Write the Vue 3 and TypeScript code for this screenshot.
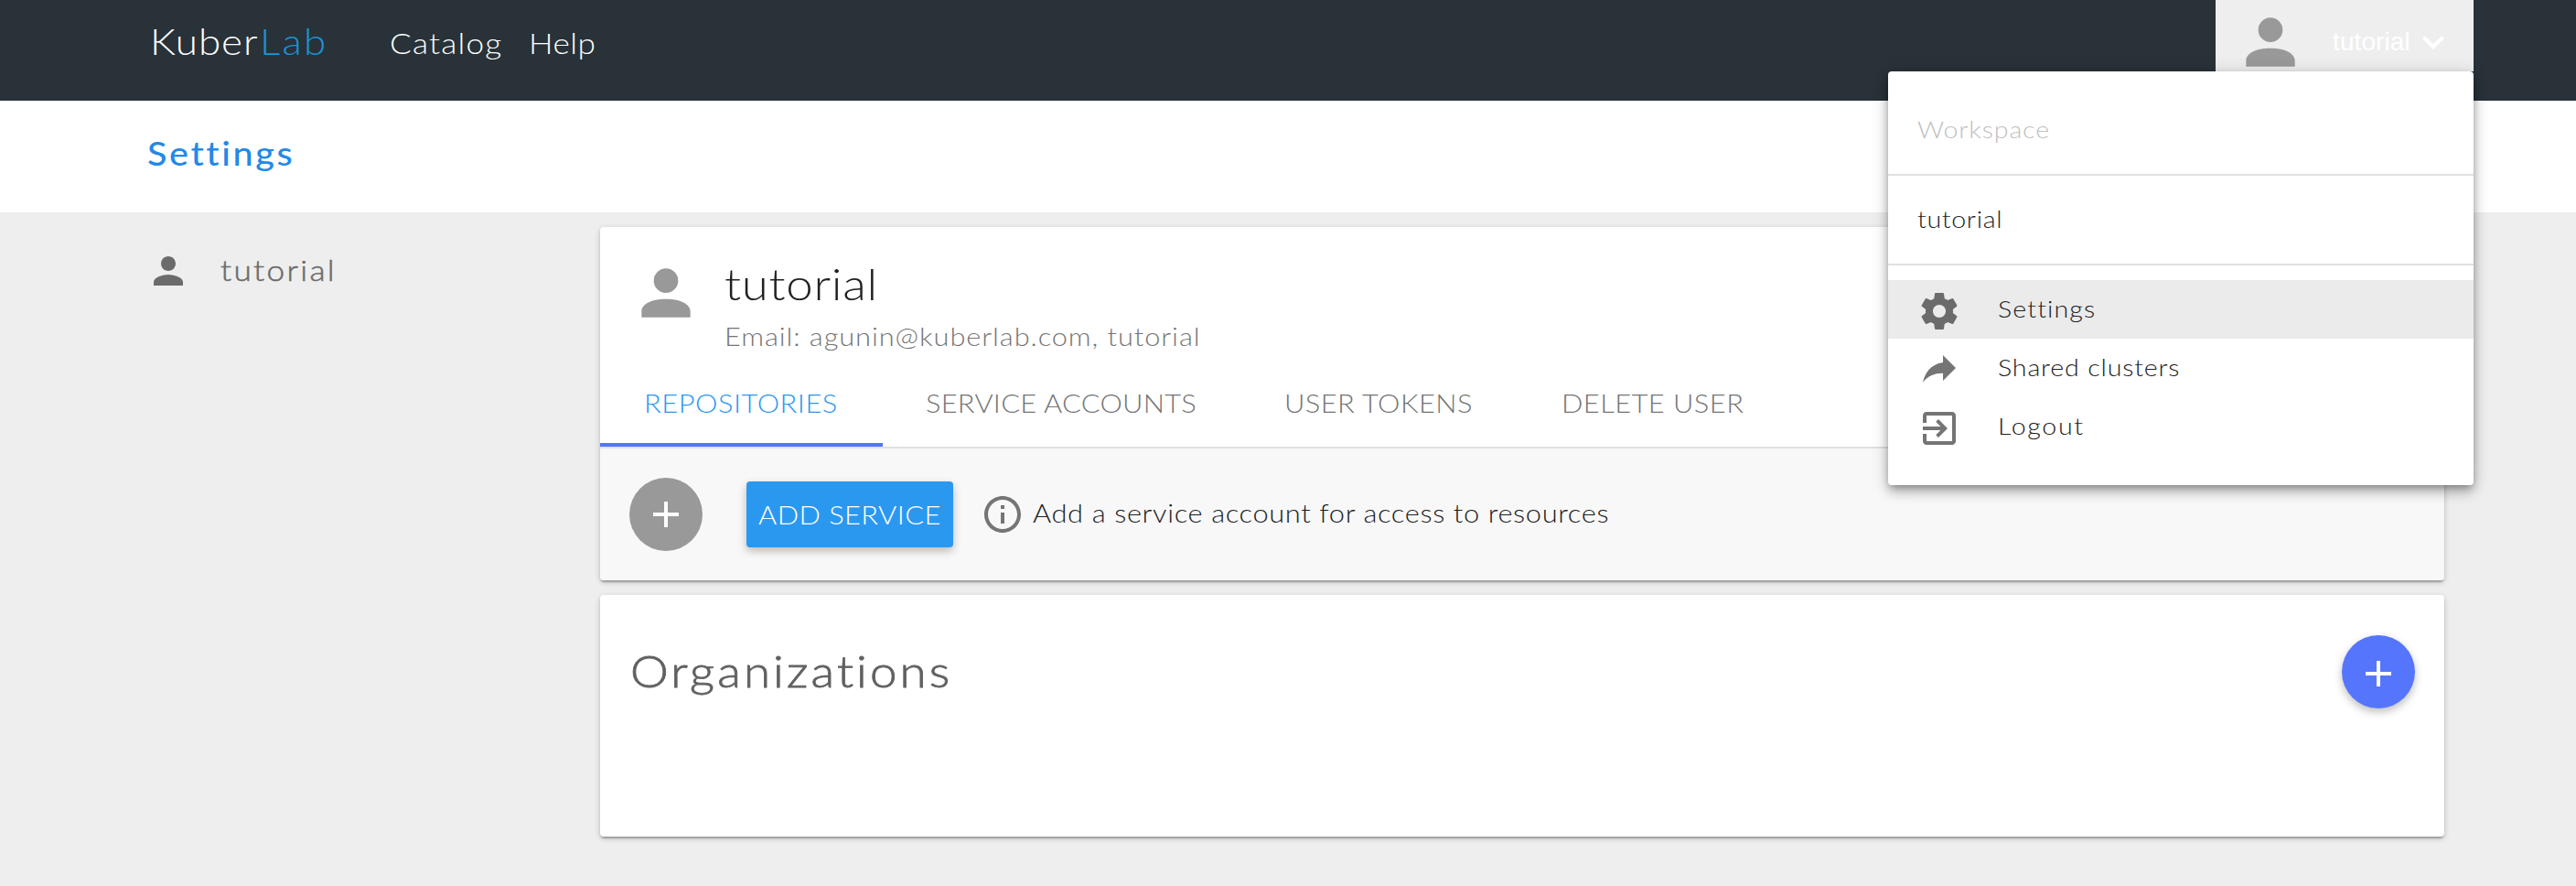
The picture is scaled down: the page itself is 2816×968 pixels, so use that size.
<script setup lang="ts">
interface Tab {
  label: string
  cls: string
  active?: boolean
}

interface MenuEntry {
  label: string
  cls: string
  icon: string
  selected?: boolean
}

const personPath =
  'M12 12c2.21 0 4-1.79 4-4s-1.79-4-4-4-4 1.79-4 4 1.79 4 4 4zm0 2c-2.67 0-8 1.34-8 4v2h16v-2c0-2.66-5.33-4-8-4z'
const avatarPath =
  'M12 12a4 4 0 1 0 0-8 4 4 0 0 0 0 8zm0 2c-5 0-8 1.8-8 4v2h16v-2c0-2.2-3-4-8-4z'
const plusPath = 'M19 13h-6v6h-2v-6H5v-2h6V5h2v6h6v2z'

const tabs: Tab[] = [
  { label: 'REPOSITORIES', cls: 'tab-repos', active: true },
  { label: 'SERVICE ACCOUNTS', cls: 'tab-accounts' },
  { label: 'USER TOKENS', cls: 'tab-tokens' },
  { label: 'DELETE USER', cls: 'tab-delete' },
]

const menu: MenuEntry[] = [
  {
    label: 'Settings',
    cls: 'm-settings',
    selected: true,
    icon: 'M19.43 12.98c.04-.32.07-.64.07-.98s-.03-.66-.07-.98l2.11-1.65c.19-.15.24-.42.12-.64l-2-3.46c-.12-.22-.39-.3-.61-.22l-2.49 1c-.52-.4-1.08-.73-1.69-.98l-.38-2.65C14.46 2.18 14.25 2 14 2h-4c-.25 0-.46.18-.49.42l-.38 2.65c-.61.25-1.17.59-1.69.98l-2.49-1c-.23-.09-.49 0-.61.22l-2 3.46c-.13.22-.07.49.12.64l2.11 1.65c-.04.32-.07.65-.07.98s.03.66.07.98l-2.11 1.65c-.19.15-.24.42-.12.64l2 3.46c.12.22.39.3.61.22l2.49-1c.52.4 1.08.73 1.69.98l.38 2.65c.03.24.24.42.49.42h4c.25 0 .46-.18.49-.42l.38-2.65c.61-.25 1.17-.59 1.69-.98l2.49 1c.23.09.49 0 .61-.22l2-3.46c.12-.22.07-.49-.12-.64l-2.11-1.65zM12 15.5c-1.93 0-3.5-1.57-3.5-3.5s1.57-3.5 3.5-3.5 3.5 1.57 3.5 3.5-1.57 3.5-3.5 3.5z',
  },
  {
    label: 'Shared clusters',
    cls: 'm-shared',
    icon: 'M21 11l-7-7v4C7 9 4 14 3 19c2.5-3.5 6-5.1 11-5.1V18l7-7z',
  },
  {
    label: 'Logout',
    cls: 'm-logout',
    icon: 'M10.09 15.59L11.5 17l5-5-5-5-1.41 1.41L12.67 11H3v2h9.67l-2.58 2.59zM19 3H5c-1.11 0-2 .9-2 2v4h2V5h14v14H5v-4H3v4c0 1.1.89 2 2 2h14c1.1 0 2-.9 2-2V5c0-1.1-.9-2-2-2z',
  },
]
</script>

<template>
  <div class="page">
    <header class="topbar">
      <a class="logo"><span class="t kuber">Kuber</span><span class="t lab">Lab</span></a>
      <nav class="nav">
        <a class="t catalog">Catalog</a>
        <a class="t help">Help</a>
      </nav>
      <button class="user" type="button">
        <svg class="i80 muted" viewBox="0 0 24 24"><path :d="avatarPath" /></svg>
        <span class="user-name">tutorial</span>
        <svg class="i48 chevron" viewBox="0 0 24 24">
          <path d="M16.59 8.59L12 13.17 7.41 8.59 6 10l6 6 6-6z" />
        </svg>
      </button>
    </header>

    <div class="titlebar"><h1 class="t page-title">Settings</h1></div>

    <div class="body">
      <aside class="sidebar">
        <a class="side-item">
          <svg class="i48" viewBox="0 0 24 24"><path :d="personPath" /></svg>
          <span class="t side-label">tutorial</span>
        </a>
      </aside>

      <main class="content">
        <section class="card account">
          <div class="profile">
            <svg class="i80 muted" viewBox="0 0 24 24"><path :d="avatarPath" /></svg>
            <div class="profile-text">
              <h2 class="t name">tutorial</h2>
              <p class="t email">Email: agunin@kuberlab.com, tutorial</p>
            </div>
          </div>
          <div class="tabs">
            <button
              v-for="tab in tabs"
              :key="tab.label"
              type="button"
              class="tab"
              :class="[tab.cls, { active: tab.active }]"
            >
              <span class="t">{{ tab.label }}</span>
            </button>
          </div>
          <div class="tools">
            <span class="round gray">
              <svg class="i48" viewBox="0 0 24 24"><path :d="plusPath" /></svg>
            </span>
            <button class="add" type="button"><span class="t add-label">ADD SERVICE</span></button>
            <svg class="i48 info" viewBox="0 0 24 24">
              <path
                d="M11 17h2v-6h-2v6zm1-15C6.48 2 2 6.48 2 12s4.48 10 10 10 10-4.48 10-10S17.52 2 12 2zm0 18c-4.41 0-8-3.59-8-8s3.59-8 8-8 8 3.59 8 8-3.59 8-8 8zM11 9h2V7h-2v2z"
              />
            </svg>
            <span class="t hint">Add a service account for access to resources</span>
          </div>
        </section>

        <section class="card orgs">
          <h2 class="t orgs-title">Organizations</h2>
          <button class="round fab" type="button">
            <svg class="i48" viewBox="0 0 24 24"><path :d="plusPath" /></svg>
          </button>
        </section>
      </main>
    </div>

    <div class="menu">
      <div class="menu-head"><span class="t workspace">Workspace</span></div>
      <div class="menu-space"><span class="t m-tutorial">tutorial</span></div>
      <ul class="menu-list">
        <li v-for="m in menu" :key="m.label" class="menu-row" :class="{ selected: m.selected }">
          <svg class="i48" viewBox="0 0 24 24"><path :d="m.icon" /></svg>
          <span class="t menu-label" :class="m.cls">{{ m.label }}</span>
        </li>
      </ul>
    </div>
  </div>
</template>

<style>
body {
  background: #eee;
}
</style>

<style scoped>
.page {
  position: relative;
  width: 2816px;
  height: 968px;
  overflow: hidden;
  background: #eee;
  font-family: Lato, "Open Sans", sans-serif;
  font-weight: 300;
  color: #212121;
}
* {
  box-sizing: border-box;
}
h1, h2, p, ul {
  margin: 0;
  padding: 0;
  font-weight: 300;
}
button {
  border: 0;
  padding: 0;
  background: none;
  font: inherit;
  color: inherit;
}
/* wide letterforms */
.t {
  display: block;
  white-space: nowrap;
  transform: scaleX(1.1);
  transform-origin: 0 50%;
}
svg {
  display: block;
  flex: none;
  fill: currentColor;
}
.i48 {
  width: 48px;
  height: 48px;
}
.i80 {
  width: 80px;
  height: 80px;
}
.muted {
  color: #999;
}

.topbar {
  display: flex;
  height: 110px;
  padding: 0 112px 0 164px;
  background: #283238;
  color: #fff;
}
.logo {
  display: flex;
  width: 262px;
  font-size: 40px;
  line-height: 90px;
}
.kuber {
  width: 120px;
  letter-spacing: 0.85px;
}
.lab {
  color: #1e93d2;
  letter-spacing: 2px;
}
.nav {
  display: flex;
  font-size: 32px;
  line-height: 94px;
}
.catalog {
  width: 152px;
  letter-spacing: 1.1px;
}
.help {
  letter-spacing: 0.4px;
}
.user {
  display: flex;
  align-items: flex-start;
  width: 282px;
  height: 78px;
  margin-left: auto;
  padding: 6px 0 0 20px;
  background: #eee;
  text-align: left;
}
.user-name {
  width: 86px;
  margin-left: 28px;
  font: 400 28px/80px "Liberation Sans", Arial, sans-serif;
  letter-spacing: 0.1px;
}
.chevron {
  margin-top: 16px;
}

.titlebar {
  height: 122px;
  padding-left: 161px;
  background: #fff;
}
.page-title {
  font-size: 36px;
  font-weight: 500;
  line-height: 114px;
  letter-spacing: 2.35px;
  color: #2489e6;
}

.body {
  display: flex;
  height: 736px;
  padding: 16px 144px 0 160px;
}
.sidebar {
  width: 496px;
}
.side-item {
  display: flex;
  align-items: center;
  height: 96px;
  color: #6b6b6b;
}
.side-label {
  margin-left: 33px;
  padding-bottom: 3px;
  font-size: 32px;
  line-height: 93px;
  letter-spacing: 2.14px;
  -webkit-text-stroke: 0.5px currentColor;
}

.content {
  display: flex;
  flex-direction: column;
  gap: 16px;
  width: 2016px;
}
.card {
  border-radius: 4px;
  background: #fff;
  box-shadow:
    0 2px 6px rgba(0, 0, 0, 0.2),
    0 2px 2px rgba(0, 0, 0, 0.14),
    0 4px 2px -2px rgba(0, 0, 0, 0.12);
}
.account {
  height: 386px;
  overflow: hidden;
}
.profile {
  display: flex;
  height: 146px;
  padding: 32px 0 0 32px;
}
.profile-text {
  margin-left: 24px;
}
.name {
  font-size: 48px;
  line-height: 60px;
  letter-spacing: 0.64px;
}
.email {
  margin-top: 9px;
  font-size: 28px;
  line-height: 36px;
  letter-spacing: 0.83px;
  color: #757575;
}
.tabs {
  display: flex;
  height: 96px;
  border-bottom: 2px solid #e0e0e0;
}
.tab {
  height: 94px;
  padding-left: 47px;
  border-bottom: 4px solid transparent;
  font-size: 28px;
  line-height: 92px;
  color: #757575;
  text-align: left;
}
.tab-repos {
  width: 309px;
  padding-left: 48px;
  letter-spacing: 0.5px;
}
.tab-accounts {
  width: 392px;
  letter-spacing: 0.24px;
}
.tab-tokens {
  width: 303px;
  letter-spacing: 0.4px;
}
.tab-delete {
  width: 296px;
  letter-spacing: 0.42px;
}
.tab.active {
  border-bottom-color: #5576fc;
  color: #2b98f0;
}
.tools {
  display: flex;
  align-items: center;
  height: 144px;
  padding-left: 32px;
  background: #f8f8f8;
}
.round {
  display: flex;
  align-items: center;
  justify-content: center;
  flex: none;
  width: 80px;
  height: 80px;
  border-radius: 50%;
  color: #fff;
}
.gray {
  background: #999;
}
.add {
  width: 226px;
  height: 72px;
  margin-left: 48px;
  padding-left: 13px;
  border-radius: 4px;
  background: #2b98f0;
  color: #fff;
  font-size: 28px;
  line-height: 70px;
  text-align: left;
  box-shadow: 0 4px 10px rgba(0, 0, 0, 0.26);
}
.add-label {
  letter-spacing: 0.4px;
}
.info {
  margin-left: 30px;
  color: #757575;
}
.hint {
  margin-left: 9px;
  font-size: 28px;
  line-height: 36px;
  padding-bottom: 5px;
  letter-spacing: 0.57px;
}
.orgs {
  display: flex;
  justify-content: space-between;
  height: 264px;
  padding: 44px 32px 0 33px;
}
.orgs-title {
  font-size: 48px;
  line-height: 77px;
  letter-spacing: 2.85px;
  color: #616161;
  -webkit-text-stroke: 0.8px currentColor;
}
.fab {
  background: #5576fc;
  padding-top: 4px;
  box-shadow: 0 4px 10px rgba(0, 0, 0, 0.26);
}

.menu {
  position: absolute;
  top: 78px;
  left: 2064px;
  width: 640px;
  height: 452px;
  border-radius: 4px;
  background: #fff;
  font-size: 26px;
  box-shadow:
    0 4px 8px -2px rgba(0, 0, 0, 0.3),
    0 8px 14px rgba(0, 0, 0, 0.2),
    0 2px 20px rgba(0, 0, 0, 0.14);
}
.menu-head {
  height: 114px;
  padding: 16px 0 0 32px;
  border-bottom: 2px solid #e0e0e0;
  line-height: 94px;
  color: #c0c0c0;
}
.workspace {
  letter-spacing: 0.78px;
}
.menu-space {
  height: 98px;
  padding-left: 32px;
  border-bottom: 2px solid #e0e0e0;
  line-height: 94px;
}
.m-tutorial {
  letter-spacing: 0.6px;
}
.menu-list {
  padding-top: 16px;
  list-style: none;
}
.menu-row {
  display: flex;
  height: 64px;
  padding: 10px 0 0 32px;
  color: #757575;
}
.menu-row.selected {
  background: #ebebeb;
  color: #6b6b6b;
}
.menu-label {
  margin: -10px 0 0 40px;
  line-height: 62px;
  color: #212121;
}
.m-settings {
  letter-spacing: 1px;
}
.m-shared {
  letter-spacing: 0.76px;
}
.m-logout {
  letter-spacing: 1.5px;
}
</style>
